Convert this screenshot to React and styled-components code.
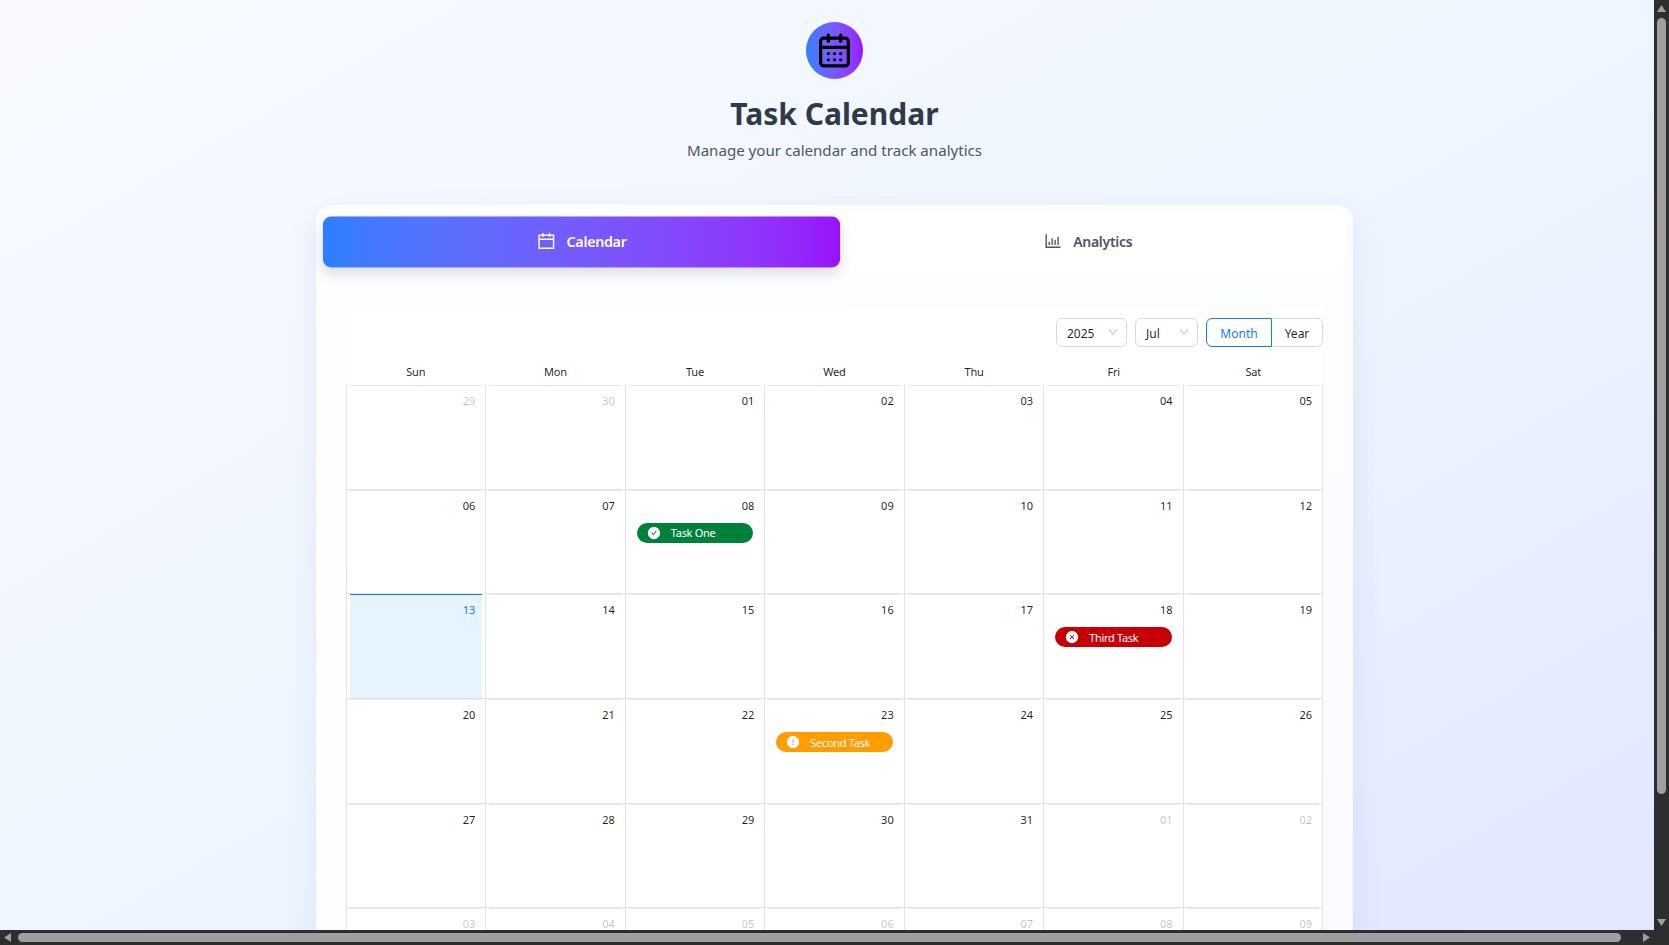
import React from 'react';
import styled, { createGlobalStyle } from 'styled-components';
import { CalendarDays } from 'lucide-react';
import {
  AiOutlineCalendar,
  AiOutlineBarChart,
  AiOutlineDown,
  AiFillCheckCircle,
  AiFillCloseCircle,
  AiFillExclamationCircle,
} from 'react-icons/ai';

const GlobalStyle = createGlobalStyle`
  html, body {
    margin: 0;
    height: 100%;
    overflow: hidden;
  }
  body {
    font-family: "Noto Sans", "Open Sans", "Liberation Sans", sans-serif;
  }
`;

const brandGradient = 'linear-gradient(to right in oklab, #2b7fff, #9810fa)';

const Viewport = styled.div`
  width: 100vw;
  height: 100vh;
  overflow: hidden;
  background: linear-gradient(to bottom right, #f8faff 0%, #eff6ff 50%, #e0e7ff 100%);
`;

const Header = styled.header`
  display: flex;
  flex-direction: column;
  align-items: center;
  padding-top: 22px;
  margin-bottom: 43px;
`;

const LogoCircle = styled.div`
  width: 57px;
  height: 57px;
  border-radius: 50%;
  display: flex;
  align-items: center;
  justify-content: center;
  color: #000;
  background: ${brandGradient};
`;

const Title = styled.h1`
  margin: 15px 0 0;
  font-size: 30px;
  line-height: 40px;
  font-weight: 700;
  color: #2d3a4b;
`;

const Subtitle = styled.p`
  margin: 4px 0 0;
  font-size: 15.1px;
  line-height: 24px;
  color: #4b5563;
`;

const Card = styled.main`
  width: 1037px;
  margin: 0 auto;
  box-sizing: border-box;
  border-radius: 16px;
  background: rgba(255, 255, 255, 0.8);
  box-shadow: 0 10px 30px rgba(80, 100, 160, 0.1);
  padding: 8px 8px 0;
`;

const TabBar = styled.nav`
  display: grid;
  grid-template-columns: 1fr 1fr;
  padding: 4px;
  height: 58px;
  box-sizing: border-box;
  background: #fff;
  border-radius: 12px;
`;

const Tab = styled.div`
  display: flex;
  align-items: center;
  justify-content: center;
  gap: 10px;
  padding-bottom: 2px;
  font-size: 14px;
  font-weight: 600;
  letter-spacing: -0.3px;
  border-radius: 8px;
  color: ${(p) => (p.$active ? '#fff' : '#4b5563')};
  background: ${(p) => (p.$active ? brandGradient : 'transparent')};
  box-shadow: ${(p) => (p.$active ? '0 6px 12px rgba(60, 60, 120, 0.18)' : 'none')};
  transform: ${(p) => (p.$active ? 'scale(1.02)' : 'none')};
  svg {
    font-size: 20px;
  }
`;

const CalendarBox = styled.section`
  margin: 36px 22px 0;
  padding-top: 11px;
  background: #fff;
`;

const Toolbar = styled.div`
  display: flex;
  justify-content: flex-end;
  gap: 8px;
  height: 29px;
`;

const SelectBox = styled.div`
  width: ${(p) => p.$width}px;
  box-sizing: border-box;
  display: flex;
  align-items: center;
  justify-content: space-between;
  padding: 1px 7px 0 10px;
  border: 1px solid #d9d9d9;
  border-radius: 6px;
  background: #fff;
  font-size: 12px;
  color: rgba(0, 0, 0, 0.88);
  svg {
    font-size: 12px;
    color: rgba(0, 0, 0, 0.25);
    margin-bottom: 3px;
  }
`;

const ModeGroup = styled.div`
  display: flex;
`;

const ModeButton = styled.div`
  box-sizing: border-box;
  display: flex;
  align-items: center;
  justify-content: center;
  padding-top: 1px;
  width: ${(p) => p.$width}px;
  font-size: 12px;
  border: 1px solid ${(p) => (p.$active ? '#1677ff' : '#d9d9d9')};
  border-left-width: ${(p) => (p.$active ? '1px' : '0')};
  border-radius: ${(p) => (p.$active ? '6px 0 0 6px' : '0 6px 6px 0')};
  color: ${(p) => (p.$active ? '#1677ff' : 'rgba(0, 0, 0, 0.88)')};
`;

const WeekHeader = styled.div`
  display: grid;
  grid-template-columns: repeat(7, 1fr);
  height: 38px;
  align-items: end;
`;

const WeekDay = styled.div`
  text-align: center;
  font-size: 11px;
  letter-spacing: -0.2px;
  line-height: 18px;
  padding-bottom: 4px;
  color: rgba(0, 0, 0, 0.88);
`;

const Grid = styled.div`
  display: grid;
  grid-template-columns: repeat(7, 1fr);
  grid-auto-rows: 104.7px;
  border-left: 1px solid #e3e3e3;
`;

const Cell = styled.div`
  box-sizing: border-box;
  border-right: 1px solid #e3e3e3;
  border-bottom: 1px solid #e3e3e3;
  padding: 0 3px;
  min-width: 0;
`;

const DateBody = styled.div`
  box-sizing: border-box;
  height: 100%;
  padding: 5px 8px 0;
  border-top: 1px solid ${(p) => (p.$today ? '#1677ff' : '#e8e8e8')};
  background: ${(p) => (p.$today ? '#e6f4ff' : 'transparent')};
`;

const DateValue = styled.div`
  text-align: right;
  font-size: 11px;
  line-height: 20px;
  margin-right: -1px;
  color: ${(p) => (p.$today ? '#1677ff' : p.$muted ? 'rgba(0, 0, 0, 0.25)' : 'rgba(0, 0, 0, 0.88)')};
`;

const TaskPill = styled.div`
  margin-top: 7px;
  height: 20px;
  display: flex;
  align-items: center;
  gap: 10px;
  padding-left: 10px;
  border-radius: 10px;
  font-size: 11px;
  letter-spacing: -0.3px;
  color: #fff;
  background: ${(p) => p.$color};
  svg {
    font-size: 14px;
    flex-shrink: 0;
  }
`;

/* the dark window scrollbars visible in the capture */
const VerticalBar = styled.div`
  position: fixed;
  top: 0;
  right: 0;
  width: 15px;
  height: 100vh;
  background: #2e2e2e;
`;

const HorizontalBar = styled.div`
  position: fixed;
  left: 0;
  bottom: 0;
  width: 100vw;
  height: 15px;
  background: #2e2e2e;
`;

const VerticalThumb = styled.div`
  position: absolute;
  top: 18px;
  left: 3px;
  width: 9px;
  height: 776px;
  border-radius: 5px;
  background: #9f9f9f;
`;

const HorizontalThumb = styled.div`
  position: absolute;
  left: 18px;
  top: 3px;
  height: 9px;
  width: 1603px;
  border-radius: 5px;
  background: #9f9f9f;
`;

const Arrow = styled.svg`
  position: absolute;
  width: 9px;
  height: 9px;
  fill: #9f9f9f;
  ${(p) => p.$place}
`;

const tasks = {
  8: { label: 'Task One', color: '#00813a', Icon: AiFillCheckCircle },
  18: { label: 'Third Task', color: '#c70008', Icon: AiFillCloseCircle },
  23: { label: 'Second Task', color: '#ff9c00', Icon: AiFillExclamationCircle },
};

const weekDays = ['Sun', 'Mon', 'Tue', 'Wed', 'Thu', 'Fri', 'Sat'];

// Jun 29 to Aug 9 2025, six rows of seven
const days = [];
for (let i = 0; i < 42; i++) {
  const inMonth = i >= 2 && i < 33;
  const n = inMonth ? i - 1 : i < 2 ? 29 + i : i - 32;
  days.push({ key: i, n, inMonth });
}

const pad = (n) => String(n).padStart(2, '0');

const App = () => {
  return (
    <Viewport>
      <GlobalStyle />
      <Header>
        <LogoCircle>
          <CalendarDays size={37} strokeWidth={2.1} />
        </LogoCircle>
        <Title>Task Calendar</Title>
        <Subtitle>Manage your calendar and track analytics</Subtitle>
      </Header>
      <Card>
        <TabBar>
          <Tab $active>
            <AiOutlineCalendar />
            Calendar
          </Tab>
          <Tab>
            <AiOutlineBarChart />
            Analytics
          </Tab>
        </TabBar>
        <CalendarBox>
          <Toolbar>
            <SelectBox $width={71}>
              2025
              <AiOutlineDown />
            </SelectBox>
            <SelectBox $width={63}>
              Jul
              <AiOutlineDown />
            </SelectBox>
            <ModeGroup>
              <ModeButton $active $width={66}>Month</ModeButton>
              <ModeButton $width={51}>Year</ModeButton>
            </ModeGroup>
          </Toolbar>
          <WeekHeader>
            {weekDays.map((d) => (
              <WeekDay key={d}>{d}</WeekDay>
            ))}
          </WeekHeader>
          <Grid>
            {days.map(({ key, n, inMonth }) => {
              const task = inMonth ? tasks[n] : null;
              const today = inMonth && n === 13;
              return (
                <Cell key={key}>
                  <DateBody $today={today}>
                    <DateValue $today={today} $muted={!inMonth}>{pad(n)}</DateValue>
                    {task && (
                      <TaskPill $color={task.color}>
                        <task.Icon />
                        {task.label}
                      </TaskPill>
                    )}
                  </DateBody>
                </Cell>
              );
            })}
          </Grid>
        </CalendarBox>
      </Card>
      <HorizontalBar>
        <Arrow $place="left: 3px; top: 3px;" viewBox="0 0 9 9"><path d="M8 0v9L1 4.5z" /></Arrow>
        <HorizontalThumb />
        <Arrow $place="left: 1642px; top: 3px;" viewBox="0 0 9 9"><path d="M1 0v9l7-4.5z" /></Arrow>
      </HorizontalBar>
      <VerticalBar>
        <Arrow $place="left: 3px; top: 4px;" viewBox="0 0 9 9"><path d="M0 8h9L4.5 1z" /></Arrow>
        <VerticalThumb />
        <Arrow $place="left: 3px; top: 918px;" viewBox="0 0 9 9"><path d="M0 1h9L4.5 8z" /></Arrow>
      </VerticalBar>
    </Viewport>
  );
};

export default App;
